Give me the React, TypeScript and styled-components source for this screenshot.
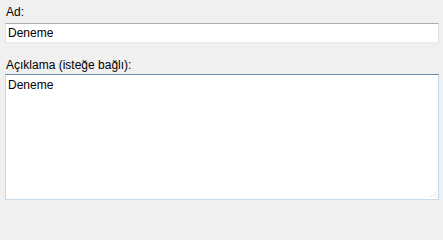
import React from 'react';
import styled, { createGlobalStyle } from 'styled-components';

const GlobalStyle = createGlobalStyle`
  html, body {
    margin: 0;
    padding: 0;
    background: #f0f0f0;
  }
`;

const Form = styled.div`
  width: 443px;
  height: 210px;
  box-sizing: border-box;
  padding: 5px 4px 10px 5px;
  display: flex;
  flex-direction: column;
  font-family: 'Liberation Sans', Arial, sans-serif;
  font-size: 12px;
  color: #000;
`;

const Label = styled.label<{ $gap?: number }>`
  display: block;
  line-height: 15px;
  margin-top: ${p => p.$gap ?? 0}px;
  margin-bottom: 3px;
  padding-left: 1px;
`;

const TextBox = styled.input`
  box-sizing: border-box;
  width: 100%;
  height: 20px;
  margin: 0;
  padding: 0 2px;
  background: #fff;
  border: 1px solid;
  border-color: #abadb3 #dbdfe6 #e3e9ef #e2e3ea;
  border-radius: 0;
  font: inherit;
  color: inherit;
  outline: none;
`;

const AreaWrap = styled.div`
  position: relative;
  flex: 1;
  display: flex;
  margin-top: -2px;
`;

const TextArea = styled.textarea`
  box-sizing: border-box;
  flex: 1;
  margin: 0;
  padding: 3px 2px;
  background: #fff;
  border: 1px solid;
  border-color: #6a8bab #c2d8ea #c8dcec #c2d8ea;
  border-radius: 0;
  font: inherit;
  line-height: 15px;
  color: inherit;
  resize: none;
  outline: none;
`;

const Grip = styled.svg`
  position: absolute;
  right: 2px;
  bottom: 2px;
`;

export default function App() {
  return (
    <>
      <GlobalStyle />
      <Form>
        <Label>Ad:</Label>
        <TextBox defaultValue="Deneme" />
        <Label $gap={15}>Açıklama (isteğe bağlı):</Label>
        <AreaWrap>
          <TextArea defaultValue="Deneme" />
          <Grip width="6" height="6" viewBox="0 0 6 6">
            <rect x="4" y="0" width="1" height="1" fill="#d6dde4" />
            <rect x="2" y="2" width="1" height="1" fill="#d6dde4" />
            <rect x="4" y="2" width="1" height="1" fill="#d6dde4" />
            <rect x="0" y="4" width="1" height="1" fill="#d6dde4" />
            <rect x="2" y="4" width="1" height="1" fill="#d6dde4" />
            <rect x="4" y="4" width="1" height="1" fill="#d6dde4" />
          </Grip>
        </AreaWrap>
      </Form>
    </>
  );
}
